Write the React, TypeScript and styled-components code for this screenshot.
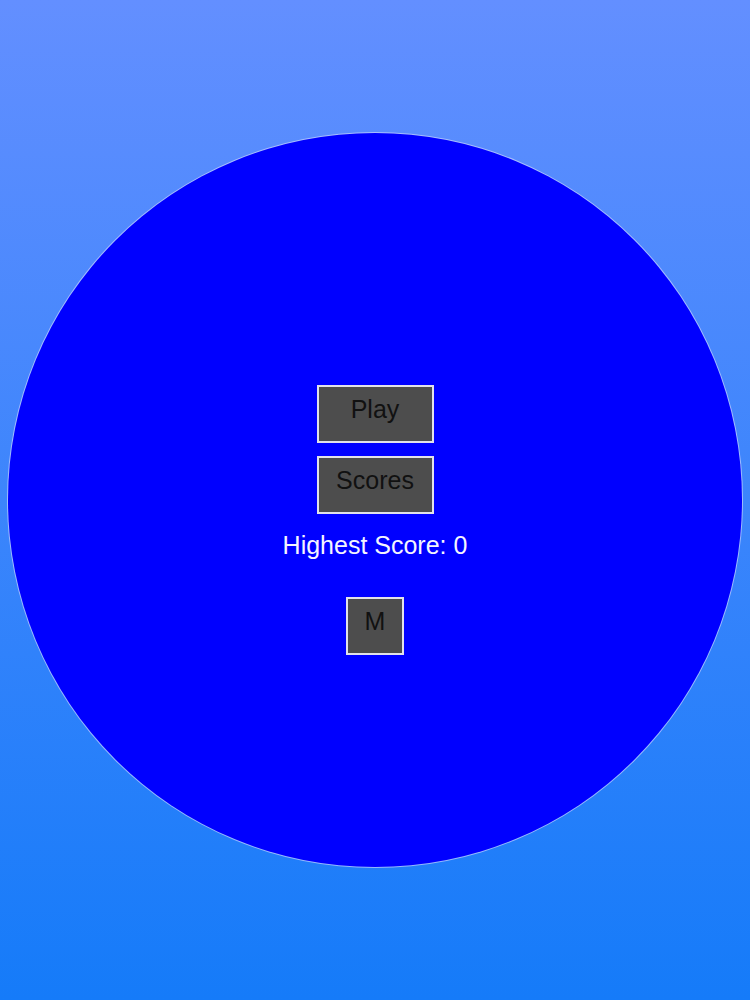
import React from "react";
import styled, { createGlobalStyle } from "styled-components";

const Global = createGlobalStyle`
  html, body { margin: 0; padding: 0; }
  body {
    font-family: "Liberation Sans", Arial, sans-serif;
  }
`;

const Screen = styled.div`
  width: 750px;
  height: 1000px;
  background: linear-gradient(to bottom, #638fff 0%, #157bf9 100%);
  display: flex;
  justify-content: center;
  padding-top: 133px;
  box-sizing: border-box;
  overflow: hidden;
`;

const Circle = styled.div`
  width: 734px;
  height: 734px;
  border-radius: 50%;
  background: #0000ff;
  box-shadow: 0 0 0 1px rgba(200, 210, 255, 0.7);
  display: flex;
  flex-direction: column;
  align-items: center;
  padding-top: 252px;
  box-sizing: border-box;
`;

const Button = styled.button<{ $w: number; $mt?: number }>`
  width: ${(p) => p.$w}px;
  height: 58px;
  margin-top: ${(p) => p.$mt ?? 0}px;
  box-sizing: border-box;
  border: 2px solid #e2e2ea;
  background: #4d4d4d;
  color: #111;
  font-family: "Liberation Sans", Arial, sans-serif;
  font-size: 25px;
  line-height: 29px;
  padding: 0 0 9px 0;
  display: flex;
  align-items: center;
  justify-content: center;
  cursor: pointer;
`;

const ScoreText = styled.div`
  margin-top: 17px;
  color: #f4f4ff;
  font-size: 25px;
  line-height: 29px;
`;

export default function App() {
  return (
    <>
      <Global />
      <Screen>
        <Circle>
          <Button $w={117}>Play</Button>
          <Button $w={117} $mt={13}>Scores</Button>
          <ScoreText>Highest Score: 0</ScoreText>
          <Button $w={58} $mt={37}>M</Button>
        </Circle>
      </Screen>
    </>
  );
}
